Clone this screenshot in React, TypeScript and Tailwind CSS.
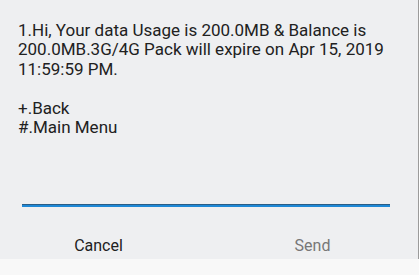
import React from "react";

export default function App() {
  const font = { fontFamily: "Roboto, 'Noto Sans', sans-serif" };
  return (
    <div className="w-[419px] h-[275px] bg-[#f8f8f8] overflow-hidden" style={font}>
      <div className="h-[259px] bg-[#eeeff1] border-r border-[#9b9b9b] flex flex-col">
        <div className="h-[204px] pt-[20.5px] pl-[18px] pr-[10px] text-[17px] leading-[19.5px] text-[#212121]">
          <div>1.Hi, Your data Usage is 200.0MB &amp; Balance is</div>
          <div>200.0MB.3G/4G Pack will expire on Apr 15, 2019</div>
          <div>11:59:59 PM.</div>
          <div>&nbsp;</div>
          <div>+.Back</div>
          <div>#.Main Menu</div>
        </div>
        <div className="ml-[22px] w-[368px] flex flex-col">
          <div className="h-px bg-[#2a5d86]" />
          <div className="h-[2px] bg-[#1e88d6]" />
        </div>
        <div className="flex mt-[28.5px] text-[16px] leading-[20px]">
          <div className="w-[197px] shrink-0 text-center text-[#212121]">Cancel</div>
          <div className="w-[231px] shrink-0 text-center text-[#777777]">Send</div>
        </div>
      </div>
    </div>
  );
}
